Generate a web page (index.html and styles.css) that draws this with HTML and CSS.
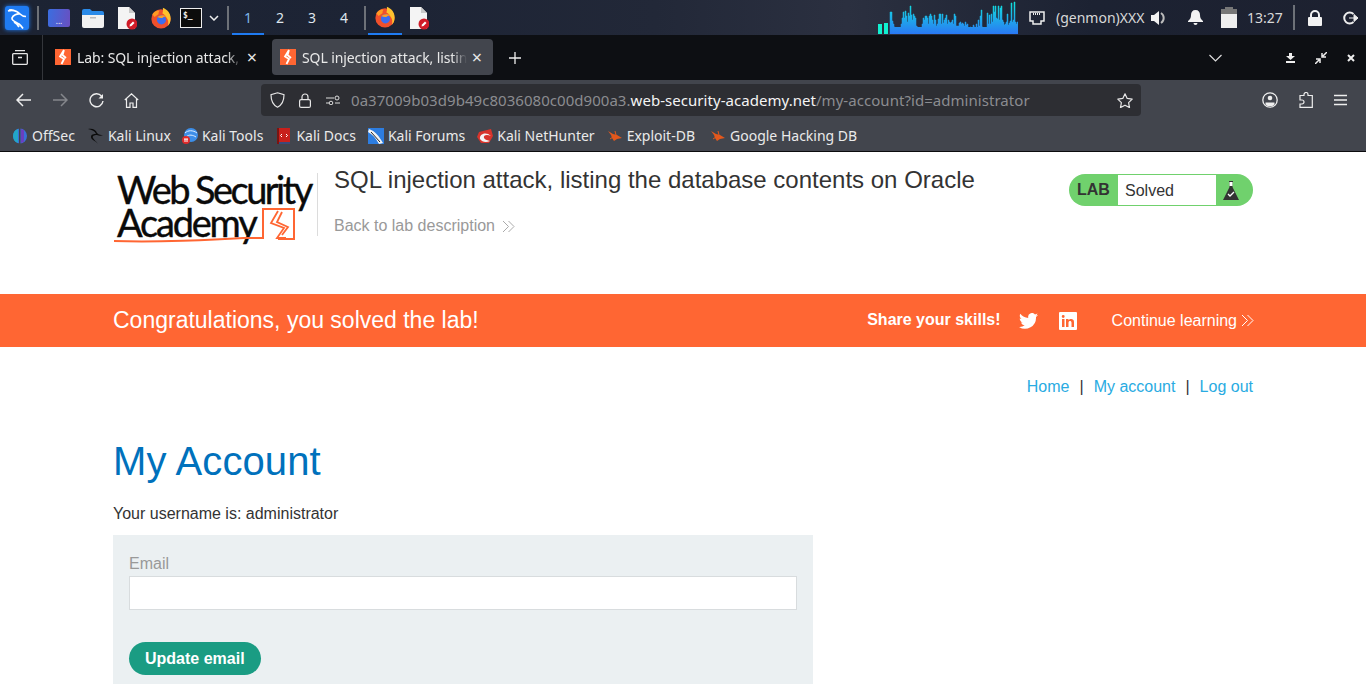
FILE: index.html
```html
<html>
<head>
    <title>SQL injection attack, listing the database contents on Oracle</title>
    <link rel="stylesheet" href="styles.css">
</head>
<body>
<svg class="defs" width="0" height="0">
    <defs>
        <linearGradient id="netfill" gradientUnits="userSpaceOnUse" x1="0" y1="2" x2="0" y2="34">
            <stop offset="0" stop-color="#10e4dc"/>
            <stop offset="1" stop-color="#2a78f4"/>
        </linearGradient>
        <symbol id="firefox" viewBox="0 0 24 24">
            <circle cx="12" cy="13" r="10.500" fill="#f0502c"/>
            <path d="M14 .8c5 2 8.500 6 8.500 11.700 0 3.500-1 6-3 8 1-3.500.5-7-2-9.500-1-2.500-2.500-3.500-4-4 .8-2 .8-4.500.5-6.200z" fill="#ffc22e"/>
            <path d="M2.500 8c2-3 5-4.500 8-4-1 1.200-1.500 2.500-1 3.500L5 11z" fill="#ff9a24"/>
            <circle cx="12.500" cy="14" r="5" fill="#3d6df0"/>
            <path d="M8 11c2-2 6-3 10.500-1-2 .2-4 .6-5 2-2 .2-4 0-5.500-1z" fill="#ff9f26"/>
        </symbol>
        <symbol id="doc" viewBox="0 0 20 24">
            <path d="M1 1h11l6 6v16H1z" fill="#f4f4f4"/>
            <path d="M12 1l6 6h-6z" fill="#c9c9c9"/>
            <circle cx="15" cy="18" r="5.500" fill="#d01c28"/>
            <path d="M12.500 20.500l.5-2 3-3 1.500 1.500-3 3z" fill="#fff"/>
        </symbol>
        <symbol id="ps" viewBox="0 0 16 16">
            <rect width="16" height="16" fill="#ff6633"/>
            <path d="M9 1L5 7.500l4 2.500-2.500 5M9 1l-1.500 5 3.500 3" fill="none" stroke="#fff" stroke-width="1.800"/>
        </symbol>
        <symbol id="bug" viewBox="0 0 16 16">
            <path d="M1 3l5 3 4 1 5 3-5 1-3 2-2-3-1-3z" fill="#e4581c"/>
            <path d="M3 11l3-2M8 3l1 4" stroke="#e4581c" fill="none"/>
        </symbol>
    </defs>
</svg>

<div class="panel">
    <div class="panel-left">
        <div class="kali-btn">
            <svg width="24" height="24" viewBox="0 0 24 24" fill="none" stroke="#fff" stroke-width="1.700"><path d="M3 5c5-1.500 9 0 12 3 2 2 4 2.500 6 2.500M15 8c-3-.5-7 1-8 4-.5 3 4 4 7 6 2 1.500 3 3 4 4.500M11 5.500C9 4 6 3.500 4 4M9 16c2 1 4 3 5 5"/></svg>
        </div>
        <span class="panel-sep"></span>
        <div class="launcher"><span>...</span></div>
        <svg class="ico-folder" width="22" height="20" viewBox="0 0 22 20"><path d="M0 3a2 2 0 0 1 2-2h6l2 2h10a2 2 0 0 1 2 2v2H0z" fill="#2a8ae8"/><path d="M0 7h22v11a2 2 0 0 1-2 2H2a2 2 0 0 1-2-2z" fill="#f1f1f1"/><rect x="8" y="9" width="6" height="1.500" fill="#bbb"/></svg>
        <svg class="ico-doc" width="20" height="24"><use href="#doc"/></svg>
        <svg class="ico-ff" width="22" height="22"><use href="#firefox"/></svg>
        <div class="term">$_</div>
        <svg class="ico-chev" width="10" height="6" viewBox="0 0 10 6"><path d="M1 1l4 4 4-4" fill="none" stroke="#eee" stroke-width="1.500"/></svg>
        <span class="panel-sep sep-b"></span>
        <div class="workspaces">
            <span class="ws ws-on">1</span>
            <span class="ws">2</span>
            <span class="ws">3</span>
            <span class="ws">4</span>
        </div>
        <span class="panel-sep sep-c"></span>
        <div class="task task-on"><svg width="22" height="22"><use href="#firefox"/></svg></div>
        <div class="task"><svg width="20" height="24"><use href="#doc"/></svg></div>
    </div>
    <div class="panel-right">
        <svg class="netgraph" width="140" height="34" viewBox="0 0 140 34">
            <rect x="0" y="24" width="4" height="10" fill="#10f0d0"/>
            <rect x="6" y="23" width="4" height="11" fill="#10f0d0"/>
            <rect x="12" y="27" width="128" height="7" fill="url(#netfill)"/>
            <path fill="url(#netfill)" stroke="url(#netfill)" stroke-width=".5" d="M12 34V12h1V12h1V21h1V24h1V27h1V28h1V29h1V29h1V28h1V30h1V29h1V24h1V18h1V12h1V18h1V11h1V16h1V22h1V13h1V16h1V6h1V15h1V20h1V14h1V16h1V18h1V26h1V27h1V28h1V29h1V29h1V30h1V24h1V18h1V20h1V16h1V16h1V18h1V24h1V16h1V14h1V16h1V20h1V24h1V15h1V20h1V26h1V24h1V19h1V14h1V14h1V24h1V14h1V23h1V20h1V18h1V15h1V24h1V20h1V22h1V23h1V22h1V20h1V24h1V14h1V16h1V26h1V26h1V26h1V23h1V22h1V24h1V23h1V24h1V26h1V22h1V25h1V24h1V28h1V29h1V27h1V30h1V28h1V25h1V27h1V28h1V24h1V30h1V20h1V26h1V16h1V10h1V27h1V30h1V29h1V29h1V28h1V13h1V24h1V15h1V24h1V14h1V22h1V6h1V12h1V6h1V18h1V19h1V6h1V20h1V8h1V6h1V20h1V22h1V25h1V24h1V22h1V14h1V25h1V23h1V21h1V3h1V22h1V20h1V2h1V22h1V24h1V22h1V34z"/>
        </svg>
        <svg class="ico-net" width="16" height="14" viewBox="0 0 16 14"><path d="M1 1h14v9h-3v3H4v-3H1z" fill="none" stroke="#eee" stroke-width="1.500"/><path d="M4 3h8" stroke="#eee" stroke-width="2" stroke-dasharray="1 1"/></svg>
        <span class="genmon">(genmon)XXX</span>
        <svg class="ico-vol" width="18" height="16" viewBox="0 0 18 16"><path d="M0 5h3l5-4v14l-5-4H0z" fill="#f2f2f2"/><path d="M10 3a6 6 0 0 1 0 10" fill="none" stroke="#bbb" stroke-width="2"/></svg>
        <svg class="ico-bell" width="15" height="15" viewBox="0 0 15 15"><path d="M7.500 0c3 0 4.500 2 4.500 5 0 3 1 4 3 6v1H0v-1c2-2 3-3 3-6 0-3 1.500-5 4.500-5zM5.500 13h4a2 2 0 0 1-4 0z" fill="#f2f2f2"/></svg>
        <svg class="ico-bat" width="16" height="21" viewBox="0 0 16 21"><rect x="4" y="0" width="8" height="2" fill="#777"/><rect x="0" y="2" width="16" height="5" fill="#777"/><rect x="0" y="7" width="16" height="14" fill="#eee"/></svg>
        <span class="clock">13:27</span>
        <span class="panel-sep sep-d"></span>
        <svg class="ico-lock" width="14" height="16" viewBox="0 0 14 16"><path d="M3 7V5a4 4 0 0 1 8 0v2" fill="none" stroke="#f2f2f2" stroke-width="2"/><rect y="7" width="14" height="9" rx="1" fill="#f2f2f2"/></svg>
        <svg class="ico-out" width="15" height="14" viewBox="0 0 15 14"><path d="M10.500 3A5.500 5.500 0 1 0 10.500 11" fill="none" stroke="#eee" stroke-width="2"/><path d="M6 7h6M11 3.500L15 7l-4 3.500z" stroke="#eee" fill="#eee"/></svg>
    </div>
</div>

<div class="tabbar">
    <div class="tabs-btn">
        <svg width="16" height="15" viewBox="0 0 16 15" fill="none" stroke="#e6e6e6" stroke-width="1.300"><path d="M3 .7h10M1.500 3.700h13a.8.800 0 0 1 .8.800v9a.8.800 0 0 1-.8.800h-13a.8.800 0 0 1-.8-.8v-9a.8.800 0 0 1 .8-.8zM6 7.500h4"/></svg>
    </div>
    <div class="tab">
        <svg width="16" height="16"><use href="#ps"/></svg>
        <span class="tab-title">Lab: SQL injection attack,</span>
        <span class="tab-x">×</span>
    </div>
    <div class="tab tab-on">
        <svg width="16" height="16"><use href="#ps"/></svg>
        <span class="tab-title">SQL injection attack, listin</span>
        <span class="tab-x">×</span>
    </div>
    <svg class="tab-plus" width="12" height="12" viewBox="0 0 12 12"><path d="M6 0v12M0 6h12" stroke="#eee" stroke-width="1.300"/></svg>
    <div class="tab-end">
        <svg class="tab-list" width="13" height="8" viewBox="0 0 13 8"><path d="M.5 1l6 6 6-6" fill="none" stroke="#ddd" stroke-width="1.200"/></svg>
        <svg class="win-min" width="9" height="10" viewBox="0 0 9 10"><path d="M3 0h3v3h3L4.500 7 0 3h3zM0 8h9v2H0z" fill="#eee"/></svg>
        <svg class="win-max" width="12" height="12" viewBox="0 0 12 12"><path d="M12 0L8 4M7 1v4h4M0 12l4-4M1 7h4v4" stroke="#eee" stroke-width="1.500" fill="none"/></svg>
        <svg class="win-x" width="8" height="8" viewBox="0 0 8 8"><path d="M1 1l6 6M7 1L1 7" stroke="#eee" stroke-width="2"/></svg>
    </div>
</div>

<div class="navbar">
    <svg class="nav-back" width="16" height="14" viewBox="0 0 16 14"><path d="M15 7H2M7 1L1 7l6 6" fill="none" stroke="#eee" stroke-width="1.500"/></svg>
    <svg class="nav-fwd" width="16" height="14" viewBox="0 0 16 14"><path d="M1 7h13M9 1l6 6-6 6" fill="none" stroke="#85878c" stroke-width="1.500"/></svg>
    <svg class="nav-reload" width="15" height="15" viewBox="0 0 15 15"><path d="M12.500 3A6.500 6.500 0 1 0 14 8" fill="none" stroke="#eee" stroke-width="1.400"/><path d="M14 1v4.500H9.500z" fill="#eee"/></svg>
    <svg class="nav-home" width="15" height="15" viewBox="0 0 15 15"><path d="M.8 7L7.500.8 14.200 7M2.500 6v8.300h3.500V10h3v4.300h3.500V6" fill="none" stroke="#eee" stroke-width="1.200"/></svg>
    <div class="urlbar">
        <svg class="url-shield" width="15" height="16" viewBox="0 0 15 16"><path d="M7.500.8l6.500 2c0 6-1.500 10-6.500 12.400C2.500 12.800 1 8.800 1 2.800z" fill="none" stroke="#e6e6e6" stroke-width="1.200"/></svg>
        <svg class="url-lock" width="12" height="15" viewBox="0 0 12 15"><path d="M3 7V4a3 3 0 0 1 6 0v3" fill="none" stroke="#e6e6e6" stroke-width="1.200"/><rect x=".6" y="6.600" width="10.800" height="7.800" rx="1.500" fill="none" stroke="#e6e6e6" stroke-width="1.200"/></svg>
        <svg class="url-perm" width="14" height="10" viewBox="0 0 14 10" fill="none" stroke="#ddd"><path d="M0 3h8M0 8h3M9 8h5"/><circle cx="11" cy="3" r="2"/><circle cx="5" cy="8" r="1.800"/></svg>
        <div class="url-text">0a37009b03d9b49c8036080c00d900a3.<b>web-security-academy.net</b>/my-account?id=administrator</div>
        <svg class="url-star" width="16" height="15" viewBox="0 0 16 15"><path d="M8 .8l2.200 4.600 5 .7-3.600 3.500.9 5L8 12.200l-4.500 2.400.9-5L.8 6.100l5-.7z" fill="none" stroke="#e6e6e6" stroke-width="1.200" stroke-linejoin="round"/></svg>
    </div>
    <div class="nav-end">
        <svg width="16" height="16" viewBox="0 0 16 16"><circle cx="8" cy="8" r="7.200" fill="none" stroke="#eee" stroke-width="1.300"/><circle cx="8" cy="6" r="2.300" fill="#eee"/><path d="M3.500 10.500h9v2l-2 1.500h-5l-2-1.500z" fill="#eee"/></svg>
        <svg width="14" height="16" viewBox="0 0 14 16"><path d="M5 3.500V2.500a2 2 0 0 1 4 0v1h4.300v11.800H1V12h2a1.800 1.800 0 0 0 0-4H1V3.500z" fill="none" stroke="#eee" stroke-width="1.200"/></svg>
        <svg width="13" height="12" viewBox="0 0 13 12"><path d="M0 1.500h13M0 6h13M0 10.500h13" stroke="#eee" stroke-width="1.300"/></svg>
    </div>
</div>

<div class="bookmarks">
    <a class="bm bm-offsec"><svg width="16" height="16" viewBox="0 0 16 16"><ellipse cx="8" cy="8" rx="7" ry="7.500" fill="#3a6fd8"/><path d="M1 8a7 7.500 0 0 0 5 7V1a7 7.500 0 0 0-5 7z" fill="#22a6c8"/><path d="M9 1v14a7 7.500 0 0 0 3-1.500V2.500A7 7.500 0 0 0 9 1z" fill="#6a3fc0"/><path d="M7 0h1.500v16H7z" fill="#42454d"/></svg>OffSec</a>
    <a class="bm bm-linux"><svg width="16" height="16" viewBox="0 0 16 16"><path d="M0 1c5-1 8 1 9 4 2 2 4 2 6 2-2 1-4 1-6 0-3 0-5 1-4 3 1 2 3 3 5 6-2-3-7-4-7-7 0-3 3-3 5-3C7 3 4 2 0 1z" fill="#0b0b0b"/></svg>Kali Linux</a>
    <a class="bm bm-tools"><svg width="16" height="16" viewBox="0 0 16 16"><circle cx="9" cy="7" r="7" fill="#3d8ee8"/><path d="M3 5c3-3 8-3 12 0M4 9c3-3 7-2 10 0" stroke="#dfefff" fill="none"/><circle cx="4" cy="12" r="4" fill="#e02a2a"/><path d="M2 11h4M3 11v3M5 11v3" stroke="#fff"/></svg>Kali Tools</a>
    <a class="bm"><svg width="16" height="16" viewBox="-1 0 16 16"><rect x="1" y="0" width="12" height="15" fill="#c8201c"/><rect x="1" y="14" width="12" height="2" fill="#3a4a7a"/><rect x="0" width="2" height="16" fill="#7a1512"/><path d="M5 6L3.500 7.500 5 9M9 6l1.500 1.500L9 9" stroke="#fff" fill="none"/></svg>Kali Docs</a>
    <a class="bm"><svg width="16" height="16" viewBox="0 0 16 16"><rect width="16" height="16" fill="#2d7de0"/><path d="M1 1c6 2 10 7 14 14l-4 1C8 10 4 6 0 4z" fill="#f4f4f4"/><path d="M3 4l9 10" stroke="#222"/></svg>Kali Forums</a>
    <a class="bm"><svg width="16" height="16" viewBox="0 0 16 16"><path d="M2 4l12-3 2 7-4 7-8 0-4-6z" fill="#d8342c"/><path d="M3 11c-1-5 6-8 11-3-4-2-8-1-7 2 1 2 4 2 6 3-4 2-8 1-10-2z" fill="#f4f4f4"/></svg>Kali NetHunter</a>
    <a class="bm bm-edb"><svg width="16" height="16"><use href="#bug"/></svg>Exploit-DB</a>
    <a class="bm"><svg width="16" height="16"><use href="#bug"/></svg>Google Hacking DB</a>
</div>

<div class="page">
    <header class="lab-header">
        <div class="container lab-row">
            <div class="logo">
                <div class="logo-line">Web Security</div>
                <div class="logo-line logo-second">Academy</div>
                <svg class="logo-mark" width="202" height="38" viewBox="0 0 202 38">
                    <path d="M1 34c40 1.500 100-1 130-3h19V2h31v30h-16" fill="none" stroke="#ff6633" stroke-width="2"/>
                    <path d="M165 4l-7 12 13 5-7 10h9M169 5l-5 10 11 5-6 8" fill="none" stroke="#ff6633" stroke-width="1.800"/>
                </svg>
            </div>
            <div class="lab-title">
                <h2>SQL injection attack, listing the database contents on Oracle</h2>
                <a class="back-link">Back to lab description <svg width="13" height="13" viewBox="0 0 13 13"><path d="M1 1l5.500 5.500L1 12M6.500 1L12 6.500 6.500 12" fill="none" stroke="#aaa"/></svg></a>
            </div>
            <div class="lab-status">
                <span class="status-lab">LAB</span>
                <span class="status-text">Solved</span>
                <span class="status-icon">
                    <svg width="16" height="20" viewBox="0 0 16 20"><path d="M6 1h4v1h-.5v5L16 20H0L6.500 7V2H6z" fill="#333"/><path d="M6.500 2h3v4h-3z" fill="#fff"/><path d="M5 14l2 2 4-4" fill="none" stroke="#fff" stroke-width="1.300"/></svg>
                </span>
            </div>
        </div>
    </header>

    <section class="solved-banner">
        <div class="container banner-row">
            <h4>Congratulations, you solved the lab!</h4>
            <div class="banner-right">
                <span class="share">Share your skills!</span>
                <svg class="ico-tw" width="19" height="16" viewBox="0 0 19 16"><path d="M19 2c-.7.300-1.400.500-2.200.6.800-.5 1.400-1.200 1.700-2.100-.8.400-1.600.8-2.500.9A3.900 3.900 0 0 0 9.300 5C6.100 4.800 3.300 3.300 1.300.8c-1 1.800-.5 4 1.200 5.200-.6 0-1.200-.2-1.800-.5 0 1.900 1.300 3.500 3.100 3.900-.6.200-1.200.2-1.800.1.500 1.600 2 2.700 3.700 2.700A7.900 7.900 0 0 1 0 13.900 11 11 0 0 0 17 4.100c.8-.6 1.500-1.300 2-2.100z" fill="#fff"/></svg>
                <svg class="ico-in" width="18" height="18" viewBox="0 0 18 18"><path fill-rule="evenodd" d="M1 0h16a1 1 0 0 1 1 1v16a1 1 0 0 1-1 1H1a1 1 0 0 1-1-1V1a1 1 0 0 1 1-1zM3 7v8h2.500V7zM4.200 3a1.400 1.400 0 1 0 0 2.900 1.400 1.400 0 0 0 0-2.900zM7 7v8h2.500v-4.200c0-2.300 3-2.400 3 0V15H15v-5c0-3.600-4-3.500-5.500-1.700V7z" fill="#fff"/></svg>
                <a class="continue">Continue learning <svg width="13" height="13" viewBox="0 0 13 13"><path d="M1 1l5.500 5.500L1 12M6.500 1L12 6.500 6.500 12" fill="none" stroke="#fff"/></svg></a>
            </div>
        </div>
    </section>

    <div class="container">
        <nav class="account-nav">
            <a>Home</a><span>|</span><a>My account</a><span>|</span><a>Log out</a>
        </nav>
        <h1>My Account</h1>
        <p class="username">Your username is: administrator</p>
        <form class="email-form">
            <label>Email</label>
            <input type="email">
            <button type="button">Update email</button>
        </form>
    </div>
</div>
</body>
</html>
```

FILE: styles.css
```css
* {
    box-sizing: border-box;
}

html, body {
    margin: 0;
    height: 684px;
    overflow: hidden;
    background: #fff;
}

body {
    font-family: "Liberation Sans", Arial, sans-serif;
    color: #333;
}

svg {
    display: block;
    flex: none;
}

.defs {
    position: absolute;
}

/* desktop panel */
.panel {
    height: 35px;
    display: flex;
    justify-content: space-between;
    background: linear-gradient(90deg, #1c2333 0%, #1d2435 30%, #222838 48%, #2b3040 62%, #1c2232 80%, #1d2130 100%);
    color: #eee;
    font-family: "Noto Sans", sans-serif;
    font-size: 14px;
}

.panel-left, .panel-right {
    display: flex;
    align-items: center;
}

.kali-btn {
    width: 24px;
    height: 24px;
    margin-left: 5px;
    background: #1f7bf2;
    border-radius: 3px;
    box-shadow: 0 0 4px #1f7bf2;
}

.panel-sep {
    width: 2px;
    height: 24px;
    margin-left: 8px;
    background: #6d7178;
}

.launcher {
    width: 22px;
    height: 18px;
    margin-left: 9px;
    background: linear-gradient(100deg, #3a6ee0, #6a4fc0);
    border-radius: 2px;
    color: #fff;
    font-size: 8px;
    line-height: 24px;
    text-align: center;
}

.ico-folder {
    margin-left: 12px;
}

.ico-doc {
    margin-left: 13px;
}

.ico-ff {
    margin-left: 13px;
}

.term {
    width: 22px;
    height: 20px;
    margin-left: 8px;
    padding-left: 2px;
    background: #0c0c0c;
    border: 1px solid #eee;
    font-family: "DejaVu Sans Mono", monospace;
    font-size: 8px;
    line-height: 14px;
    font-weight: bold;
}

.ico-chev {
    margin-left: 7px;
}

.sep-b {
    margin-left: 8px;
}

.workspaces {
    display: flex;
    margin-left: 3px;
    height: 100%;
}

.ws {
    width: 32px;
    height: 100%;
    text-align: center;
    line-height: 35px;
    color: #dfe6ee;
}

.ws-on {
    border-bottom: 2px solid #1f7bf2;
    color: #7fb6e8;
}

.sep-c {
    margin-left: 4px;
}

.task {
    width: 34px;
    height: 100%;
    display: flex;
    align-items: center;
    justify-content: center;
    margin-left: 2px;
}

.task + .task {
    width: 30px;
    margin-left: 2px;
}

.task-on {
    border-bottom: 2px solid #1f7bf2;
}

.panel-right .netgraph {
    align-self: flex-end;
    margin-bottom: 1px;
}

.ico-net {
    margin-left: 11px;
}

.genmon {
    margin-left: 11px;
    width: 86px;
    white-space: nowrap;
    color: #d8d8d8;
}

.ico-vol {
    margin-left: 9px;
}

.ico-bell {
    margin-left: 19px;
}

.ico-bat {
    margin-left: 18px;
}

.clock {
    margin-left: 10px;
    width: 34px;
    color: #d8d8d8;
}

.sep-d {
    margin-left: 12px;
    height: 25px;
}

.ico-lock {
    margin-left: 13px;
}

.ico-out {
    margin-left: 21px;
    margin-right: 8px;
}

/* browser tabs */
.tabbar {
    height: 45px;
    display: flex;
    align-items: center;
    background: #0d0f13;
    color: #e8e8e8;
    font-family: "Noto Sans", sans-serif;
    font-size: 14px;
}

.tabs-btn {
    width: 43px;
    height: 100%;
    padding: 15px 0 0 12px;
    border-right: 1px solid #34363b;
}

.tab {
    width: 221px;
    height: 36px;
    align-self: flex-start;
    margin-top: 4px;
    margin-left: 4px;
    padding-left: 8px;
    display: flex;
    align-items: center;
    gap: 6px;
    border-radius: 4px;
}

.tab-on {
    background: #42454d;
}

.tab-title {
    width: 165px;
    overflow: hidden;
    white-space: nowrap;
    -webkit-mask-image: linear-gradient(90deg, #000 150px, transparent 165px);
    mask-image: linear-gradient(90deg, #000 150px, transparent 165px);
    letter-spacing: -.1px;
}

.tab-x {
    width: 14px;
    font-size: 18px;
    line-height: 18px;
    margin-left: -3px;
    text-align: center;
}

.tab-plus {
    margin-left: 16px;
}

.tab-end {
    margin-left: auto;
    display: flex;
    align-items: center;
}

.tab-list {
    margin-right: 64px;
}

.win-min {
    margin-right: 20px;
}

.win-max {
    margin-right: 20px;
}

.win-x {
    margin-right: 11px;
}

/* navigation bar */
.navbar {
    height: 40px;
    display: flex;
    align-items: center;
    background: #42454d;
    padding-left: 16px;
}

.nav-fwd {
    margin-left: 20px;
}

.nav-reload {
    margin-left: 21px;
}

.nav-home {
    margin-left: 20px;
}

.urlbar {
    width: 880px;
    height: 32px;
    margin-left: 122px;
    padding: 0 8px 0 9px;
    display: flex;
    align-items: center;
    background: #2d2e33;
    border-radius: 4px;
    font-family: "Noto Sans", sans-serif;
    font-size: 15px;
    letter-spacing: .045px;
}

.url-lock {
    margin-left: 14px;
}

.url-perm {
    margin-left: 15px;
}

.url-text {
    margin-left: 11px;
    color: #8b8c90;
    white-space: nowrap;
}

.url-text b {
    font-weight: normal;
    color: #f4f4f4;
}

.url-star {
    margin-left: auto;
}

.nav-end {
    display: flex;
    align-items: center;
    margin-left: 121px;
    gap: 21px;
}

/* bookmarks */
.bookmarks {
    height: 32px;
    padding-left: 12px;
    display: flex;
    align-items: center;
    background: #42454d;
    border-bottom: 1px solid #0c0c0e;
    color: #eaeaea;
    font-family: "Noto Sans", sans-serif;
    font-size: 14px;
}

.bm {
    display: flex;
    align-items: center;
    gap: 4px;
    white-space: nowrap;
    margin-right: 12px;
}

.bm-offsec {
    margin-right: 13px;
}

.bm-linux {
    margin-right: 11px;
}

.bm-tools {
    margin-right: 13px;
}

.bm-edb {
    margin-right: 15px;
}

/* page */
.container {
    width: 1140px;
    margin: 0 auto;
}

.lab-header {
    height: 142px;
}

.lab-row {
    display: flex;
    align-items: flex-start;
}

.logo {
    position: relative;
    width: 205px;
    height: 63px;
    margin-top: 21px;
    padding-left: 4px;
    border-right: 1px solid #dcdcdc;
    color: #0a0a0a;
    font-family: Lato, sans-serif;
    font-size: 38px;
    letter-spacing: -2.550px;
    line-height: 34px;
    white-space: nowrap;
    -webkit-text-stroke: .4px #0a0a0a;
}

.logo-line {
    margin-top: -1px;
}

.logo-second {
    letter-spacing: -2.200px;
}

.logo-mark {
    position: absolute;
    left: 0;
    top: 34px;
}

.lab-title {
    margin-left: 16px;
}

.lab-title h2 {
    margin: 14px 0 0;
    font-size: 24px;
    font-weight: normal;
    line-height: 28px;
    color: #333;
}

.back-link {
    display: flex;
    align-items: center;
    gap: 7px;
    margin-top: 22px;
    color: #999;
    font-size: 16px;
    line-height: 20px;
}

.lab-status {
    margin-left: auto;
    margin-top: 22px;
    width: 184px;
    height: 32px;
    display: flex;
    align-items: center;
    background: #70d16d;
    border-radius: 16px;
    overflow: hidden;
    font-size: 16px;
}

.status-lab {
    width: 49px;
    padding-left: 8px;
    font-weight: bold;
    line-height: 36px;
    color: #333;
}

.status-text {
    width: 98px;
    height: 30px;
    padding-left: 7px;
    background: #fff;
    line-height: 32px;
}

.status-icon {
    padding-left: 7px;
}

.solved-banner {
    height: 53px;
    background: #ff6633;
    color: #fff;
}

.banner-row {
    height: 100%;
    display: flex;
    align-items: center;
    justify-content: space-between;
}

.solved-banner h4 {
    margin: 0;
    font-size: 23px;
    font-weight: normal;
}

.banner-right {
    display: flex;
    align-items: center;
    margin-right: -1px;
}

.share {
    font-weight: bold;
    font-size: 16px;
    margin-top: -2px;
}

.ico-tw {
    margin-left: 18px;
}

.ico-in {
    margin-left: 21px;
}

.continue {
    display: flex;
    align-items: center;
    gap: 4px;
    margin-left: 35px;
    font-size: 16px;
}

.account-nav {
    margin-top: 30px;
    display: flex;
    justify-content: flex-end;
    gap: 10px;
    font-size: 16px;
    line-height: 20px;
}

.account-nav a {
    color: #29abe2;
}

.account-nav span {
    color: #333;
}

h1 {
    margin: 41px 0 0;
    font-size: 40px;
    font-weight: normal;
    line-height: 46px;
    letter-spacing: .1px;
    color: #0071bc;
}

.username {
    margin: 20px 0 0;
    font-size: 16px;
    line-height: 20px;
}

.email-form {
    width: 700px;
    margin-top: 11px;
    padding: 19px 16px 16px;
    background: #ebf0f2;
}

.email-form label {
    display: block;
    font-size: 16px;
    line-height: 20px;
    color: #999;
}

.email-form input {
    display: block;
    width: 100%;
    height: 34px;
    margin-top: 2px;
    background: #fff;
    border: 1px solid #d8dcde;
    border-radius: 0;
}

.email-form button {
    display: block;
    margin-top: 32px;
    height: 33px;
    padding: 0 16px;
    background: #1a9c83;
    border: 0;
    border-radius: 17px;
    color: #fff;
    font-family: inherit;
    font-size: 16px;
    font-weight: bold;
}
```
